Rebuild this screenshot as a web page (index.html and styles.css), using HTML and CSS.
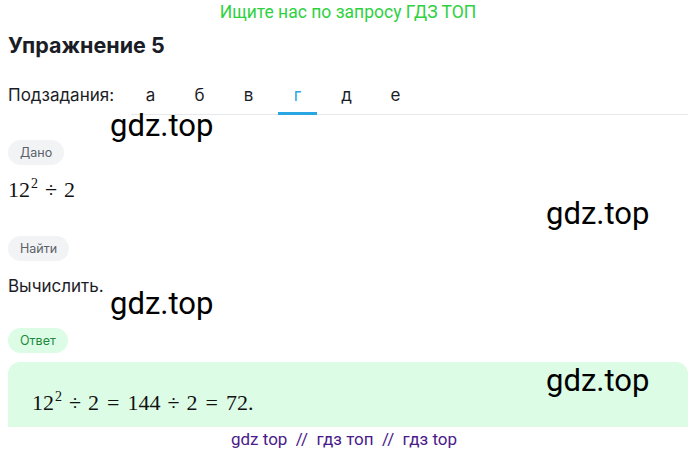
FILE: index.html
```html
<!DOCTYPE html>
<html lang="ru">
<head>
<meta charset="utf-8">
<link rel="stylesheet" href="styles.css">
</head>
<body>
<div class="page">
  <div class="promo">Ищите нас по запросу ГДЗ ТОП</div>
  <h1 class="title">Упражнение 5</h1>
  <div class="subtasks">
    <span class="subtasks-label">Подзадания:</span>
    <div class="tabs">
      <span class="tab">а</span>
      <span class="tab">б</span>
      <span class="tab">в</span>
      <span class="tab tab-active">г</span>
      <span class="tab">д</span>
      <span class="tab">е</span>
    </div>
  </div>

  <div class="pill pill-gray pill-given">Дано</div>
  <div class="math math-given">12<sup>2</sup><span class="op">÷</span>2</div>

  <div class="pill pill-gray pill-find">Найти</div>
  <div class="text">Вычислить.</div>

  <div class="pill pill-green">Ответ</div>
  <div class="answer">
    <div class="math">12<sup>2</sup><span class="op">÷</span>2<span class="rel">=</span>144<span class="op">÷</span>2<span class="rel">=</span>72.</div>
  </div>
  <div class="footer">gdz top &nbsp;//&nbsp; гдз топ &nbsp;//&nbsp; гдз top</div>

  <span class="wm wm1">gdz.top</span>
  <span class="wm wm2">gdz.top</span>
  <span class="wm wm3">gdz.top</span>
  <span class="wm wm4">gdz.top</span>
</div>
</body>
</html>
```

FILE: styles.css
```css
* { box-sizing: border-box; }
html, body { margin: 0; padding: 0; background: #fff; }
body {
  font-family: Inter, Roboto, "Noto Sans", sans-serif;
  color: #1b1d26;
  width: 695px;
  height: 454px;
  overflow: hidden;
}
.page {
  position: relative;
  padding: 0 7px 0 8px;
}
.promo {
  text-align: center;
  font-family: Roboto, sans-serif;
  color: #2ed13f;
  font-size: 17.5px;
  line-height: 24px;
}
.title {
  margin: 7px 0 0;
  font-size: 21.5px;
  font-weight: 700;
  line-height: 28px;
  color: #1b1d26;
}
.subtasks {
  display: flex;
  margin-top: 19px;
}
.subtasks-label {
  font-size: 17px;
  line-height: 34px;
  width: 123px;
  flex: none;
}
.tabs {
  flex: 1;
  display: flex;
  gap: 10px;
  border-bottom: 1px solid #e6e8eb;
}
.tab {
  width: 39px;
  text-align: center;
  font-size: 17px;
  line-height: 34px;
  color: #1b1d26;
  border-bottom: 3px solid transparent;
  margin-bottom: -1px;
}
.tab-active {
  color: #2aa7e2;
  border-bottom-color: #2aa7e2;
}
.pill {
  display: inline-block;
  font-size: 12.5px;
  line-height: 25px;
  height: 25px;
  padding: 0 12px;
  border-radius: 13px;
}
.pill-gray { background: #f1f3f5; color: #5d6068; }
.pill-green { background: #dcfce6; color: #1f8a3e; margin-top: 30px; }
.pill-given { margin-top: 25px; }
.pill-find { margin-top: 30px; }
.math {
  font-family: "Liberation Serif", "DejaVu Serif", serif;
  font-size: 22px;
  line-height: 26px;
  color: #111;
}
.math sup {
  font-size: 14px;
  vertical-align: 0;
  position: relative;
  top: -9px;
  margin-left: 1px;
}
.op { padding: 0 7px; }
.rel { padding: 0 8px; }
.math-given { margin-top: 12px; }
.text {
  margin-top: 13px;
  font-size: 17px;
  line-height: 24px;
}
.answer {
  margin-top: 9px;
  width: 680px;
  height: 65px;
  background: #dcfce6;
  border-radius: 12px 12px 0 0;
  padding: 28px 0 0 24px;
}
.footer {
  text-align: center;
  font-family: Roboto, sans-serif;
  color: #4a1a8a;
  font-size: 17px;
  line-height: 24px;
  padding-right: 8px;
}
.wm {
  position: absolute;
  font-family: Roboto, sans-serif;
  font-size: 31px;
  line-height: 34px;
  color: #000;
}
.wm1 { left: 110px; top: 109px; }
.wm2 { left: 546px; top: 197px; }
.wm3 { left: 110px; top: 287px; }
.wm4 { left: 546px; top: 364px; }
```
